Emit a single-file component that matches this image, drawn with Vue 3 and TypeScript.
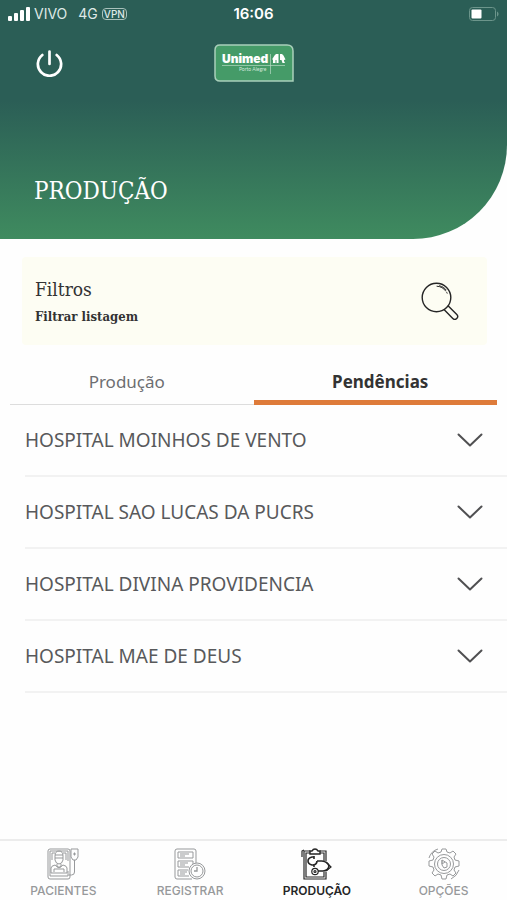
<script setup lang="ts">
import { ref } from 'vue'

type TabId = 'producao' | 'pendencias'
type NavId = 'pacientes' | 'registrar' | 'producao' | 'opcoes'

const tabs: { id: TabId; label: string }[] = [
  { id: 'producao', label: 'Produção' },
  { id: 'pendencias', label: 'Pendências' },
]

const navItems: { id: NavId; label: string }[] = [
  { id: 'pacientes', label: 'PACIENTES' },
  { id: 'registrar', label: 'REGISTRAR' },
  { id: 'producao', label: 'PRODUÇÃO' },
  { id: 'opcoes', label: 'OPÇÕES' },
]

const hospitals: string[] = [
  'HOSPITAL MOINHOS DE VENTO',
  'HOSPITAL SAO LUCAS DA PUCRS',
  'HOSPITAL DIVINA PROVIDENCIA',
  'HOSPITAL MAE DE DEUS',
]

const activeTab = ref<TabId>('pendencias')
const activeNav = ref<NavId>('producao')
</script>

<template>
  <div class="screen">
    <header class="header">
      <div class="status">
        <div class="carrier">
          <svg class="signal" viewBox="0 0 22 14" aria-hidden="true">
            <rect x="0" y="9" width="4" height="5" rx="1" />
            <rect x="6" y="6" width="4" height="8" rx="1" />
            <rect x="12" y="3" width="4" height="11" rx="1" />
            <rect x="18" y="0" width="4" height="14" rx="1" />
          </svg>
          <span>VIVO</span>
          <span class="network">4G</span>
          <span class="vpn">VPN</span>
        </div>
        <span class="time">16:06</span>
        <svg class="battery" viewBox="0 0 30 14" aria-hidden="true">
          <rect x="0.5" y="0.5" width="26" height="13" rx="3" fill="none" stroke="#6c958b" />
          <rect x="2.5" y="2.5" width="10" height="9" rx="1" fill="#fff" />
          <path d="M28 4.500c2 .8 2 4.200 0 5z" fill="#6c958b" />
        </svg>
      </div>
      <div class="topbar">
        <button class="power" type="button" aria-label="Sair">
          <svg viewBox="0 0 26 26" aria-hidden="true">
            <path d="M6.100 4.800A11.200 11.200 0 1 0 19.900 4.800M13 1.500v12" fill="none" stroke="#fff" stroke-width="2.600" stroke-linecap="round" />
          </svg>
        </button>
        <svg class="logo" viewBox="0 0 80 38" role="img" aria-label="Unimed Porto Alegre">
          <path d="M6 1H73Q79 1 79 7V37H6Q1 37 1 32V6Q1 1 6 1Z" fill="#459b68" stroke="#a9cfba" stroke-width="1.500" />
          <text x="8" y="19" class="logo-name">Unimed</text>
          <text x="25" y="27" class="logo-city">Porto Alegre</text>
          <path d="M8 21.500H71M56.500 10V30" stroke="#b5d8c3" stroke-width="0.700" />
          <path d="M58 15.500l2.500-4 1.500-1.500h2.500v9H62.500v-3h-1v3H59v-3.500zM66 10h2l1.500 1.500 2 4-1.500.5v1l1 2h-2.500L67.500 16H66z" fill="#fff" />
        </svg>
        <span></span>
      </div>
      <h1 class="title">PRODUÇÃO</h1>
    </header>

    <main class="content">
      <button class="filter" type="button">
        <span class="filter-text">
          <span class="filter-title">Filtros</span>
          <strong class="filter-sub">Filtrar listagem</strong>
        </span>
        <svg class="search" viewBox="0 0 38 38" fill="none" stroke="#252525" stroke-width="1.400" stroke-linecap="round" aria-hidden="true">
          <circle cx="15.500" cy="15.500" r="14.300" />
          <path d="M23.500 28l8.300 8.500a2.600 2.600 0 0 0 4-3.900L27.300 24" />
          <path d="M16 4.200c3.500.2 6.800 1.900 8.700 4.800M18.500 3.800c3 .7 5 2 6.500 4M25.800 10.500l.3.700" stroke-width="1" />
        </svg>
      </button>

      <div class="tabs" role="tablist">
        <button
          v-for="tab in tabs"
          :key="tab.id"
          type="button"
          role="tab"
          class="tab"
          :class="{ active: activeTab === tab.id }"
          :aria-selected="activeTab === tab.id"
          @click="activeTab = tab.id"
        >
          {{ tab.label }}
        </button>
      </div>

      <ul class="list">
        <li v-for="name in hospitals" :key="name">
          <button class="row" type="button">
            <span>{{ name }}</span>
            <svg class="chevron" viewBox="0 0 26 14" aria-hidden="true">
              <path d="M1.500 1.500L13 12.500 24.500 1.500" fill="none" stroke="#505052" stroke-width="2" stroke-linecap="round" stroke-linejoin="round" />
            </svg>
          </button>
        </li>
      </ul>
    </main>

    <nav class="nav">
      <a
        v-for="item in navItems"
        :key="item.id"
        :href="'#' + item.id"
        class="nav-item"
        :class="{ active: activeNav === item.id }"
        @click.prevent="activeNav = item.id"
      >
        <svg class="nav-icon" viewBox="0 0 32 32" fill="none" stroke="currentColor" aria-hidden="true">
          <!-- patient in bed with drip -->
          <g v-if="item.id === 'pacientes'">
            <rect x="1" y="1" width="22" height="30" rx="2" />
            <path d="M3 28V3h18v10M3 28h18v-5M5 12V5h3M16 5h3v7M8 8q0-5 4-5t4 5v4q-1 4-4 4t-4-4zM8 7h8M8 10h8M10 16v3h4v-3M4 25v-5q0-2 4-3l4 3 4-3q4 1 4 3v5zM7 21h10M7 24V21M17 24V21" />
            <path d="M24 1h7v8l-2 3h-3l-2-3zM27.500 12v12q0 3-3 3h-3M26 6h3M27.500 4.500v3" />
          </g>
          <!-- form with clock -->
          <g v-else-if="item.id === 'registrar'">
            <path d="M18 31H3q-2 0-2-2V3q0-2 2-2h17q2 0 2 2v12" />
            <path d="M4 4h15v6H4zM19 16v-3H4v6h11M14 22H4v6h11M6 6h9M6 8h5M6 15h8M6 17h5M6 24h7M6 26h5" />
            <circle cx="23" cy="23" r="8" />
            <circle cx="23" cy="23" r="6" />
            <path d="M23 19v4h-3" stroke-width="1.300" />
          </g>
          <!-- clipboard with stethoscope -->
          <g v-else-if="item.id === 'producao'" stroke-width="1.200">
            <path d="M9 3H3v28h22v-7M19 3h6v10M9 5H5v24h18v-5M19 5h4v8" />
            <path d="M9 6V3h2q1-2 3-2t3 2h2v3z" stroke-width="1.400" />
            <path d="M13 9h-2q-4 1-4 4t4 4h2q3-1 3-4M13 8v3M13 16v3M16 13h5q6 1 7 5-1 5-6 5h-5" stroke-width="1.600" />
            <path d="M25 14l5 5-5 4" />
            <circle cx="14" cy="23.500" r="3.200" />
            <circle cx="14" cy="23.500" r="1" />
            <path d="M1 9V3l2-1" />
          </g>
          <!-- gear -->
          <g v-else>
            <path d="M13 4l1-3h4l1 3 3 1 3-2 3 3-2 3 1 3 4 1v5l-4 1-1 3 2 3-3 3-3-2-3 1-1 4h-4l-1-4-3-1-3 2-3-3 2-3-1-3-4-1v-5l4-1 1-3-2-3 3-3 3 2z" />
            <circle cx="16" cy="16" r="9.500" />
            <circle cx="16" cy="16" r="6.500" />
            <path d="M14 12l5 3v4l-3 1-2-3zM14 12v4l3-2M1 10q2-7 9-9M31 22q-2 6-8 9" />
          </g>
        </svg>
        <span>{{ item.label }}</span>
      </a>
    </nav>
  </div>
</template>

<style>
body {
  margin: 0;
  background: #fefefe;
}
</style>

<style scoped>
.screen {
  min-height: 100vh;
  display: flex;
  flex-direction: column;
  background: #fefefe;
  font-family: 'Noto Sans', sans-serif;
  color: #58595b;
}

button {
  border: 0;
  padding: 0;
  margin: 0;
  background: none;
  font: inherit;
  color: inherit;
  cursor: pointer;
}

svg {
  display: block;
}

.header {
  background: linear-gradient(#2b5e56 0%, #2b5e56 42%, #3f8b5f 100%);
  border-bottom-right-radius: 94px;
  color: #fff;
  padding-bottom: 31px;
}

.status {
  display: grid;
  grid-template-columns: 1fr auto 1fr;
  align-items: center;
  height: 27px;
  padding: 0 8px;
  font-family: Inter, sans-serif;
  font-size: 14px;
  color: #dfe9e6;
}

.carrier {
  display: flex;
  align-items: center;
  gap: 4px;
}

.signal {
  width: 22px;
  height: 14px;
  fill: #fff;
}

.network {
  margin-left: 7px;
}

.vpn {
  border: 1px solid #a9c1bb;
  border-radius: 4px;
  padding: 0 1px;
  font-size: 10px;
  font-weight: 500;
  line-height: 10px;
}

.time {
  color: #fff;
  font-size: 15px;
  font-weight: 600;
}

.battery {
  justify-self: end;
  width: 30px;
  height: 14px;
}

.topbar {
  display: grid;
  grid-template-columns: 1fr auto 1fr;
  align-items: center;
  padding: 17px 36px 0;
}

.power {
  justify-self: start;
}

.power svg {
  width: 27px;
  height: 27px;
}

.logo {
  width: 80px;
  height: 38px;
}

.logo-name {
  font: 900 12px Inter, sans-serif;
  fill: #fff;
}

.logo-city {
  font: 5px Lato, sans-serif;
  fill: #d3e8dc;
}

.title {
  margin: 93px 34px 0;
  font-family: 'DejaVu Serif Condensed', 'DejaVu Serif', serif;
  font-size: 24px;
  font-weight: 400;
  line-height: 33px;
}

.content {
  flex: 1;
}

.filter {
  display: flex;
  align-items: center;
  justify-content: space-between;
  width: calc(100% - 42px);
  margin: 18px 20px 0 22px;
  padding: 18px 28px 18px 13px;
  background: #fdfdf3;
  border-radius: 4px;
  text-align: left;
  font-family: 'DejaVu Serif Condensed', 'DejaVu Serif', serif;
  color: #333;
}

.filter-text {
  display: flex;
  flex-direction: column;
  gap: 4px;
}

.filter-title {
  font-size: 19px;
  line-height: 28px;
}

.filter-sub {
  font-size: 13px;
  line-height: 20px;
}

.search {
  width: 38px;
  height: 38px;
}

.tabs {
  display: flex;
  margin: 12px 10px 0;
}

.tab {
  flex: 1;
  height: 48px;
  padding-right: 10px;
  box-shadow: inset 0 -1px #ddd;
  font-size: 17px;
  color: #6d6e71;
}

.tab:last-child {
  padding: 0 0 0 10px;
}

.tab.active {
  box-shadow: inset 0 -5px #de7b3a;
  font-weight: 700;
  color: #333;
}

.list {
  list-style: none;
  margin: 0 0 0 25px;
  padding: 0;
}

.list li {
  border-bottom: 2px solid #f2f2f2;
}

.row {
  display: flex;
  align-items: center;
  justify-content: space-between;
  width: 100%;
  height: 70px;
  padding-right: 24px;
  font-size: 19px;
  text-align: left;
}

.chevron {
  width: 26px;
  height: 14px;
}

.nav {
  display: grid;
  grid-template-columns: repeat(4, 1fr);
  height: 59px;
  border-top: 2px solid #ececec;
}

.nav-item {
  display: flex;
  flex-direction: column;
  align-items: center;
  gap: 3px;
  padding-top: 7px;
  font-family: Inter, sans-serif;
  font-size: 12px;
  font-weight: 500;
  line-height: 16px;
  color: #97999b;
  text-decoration: none;
}

.nav-item.active {
  color: #252525;
  font-weight: 600;
}

.nav-icon {
  width: 32px;
  height: 32px;
}
</style>
